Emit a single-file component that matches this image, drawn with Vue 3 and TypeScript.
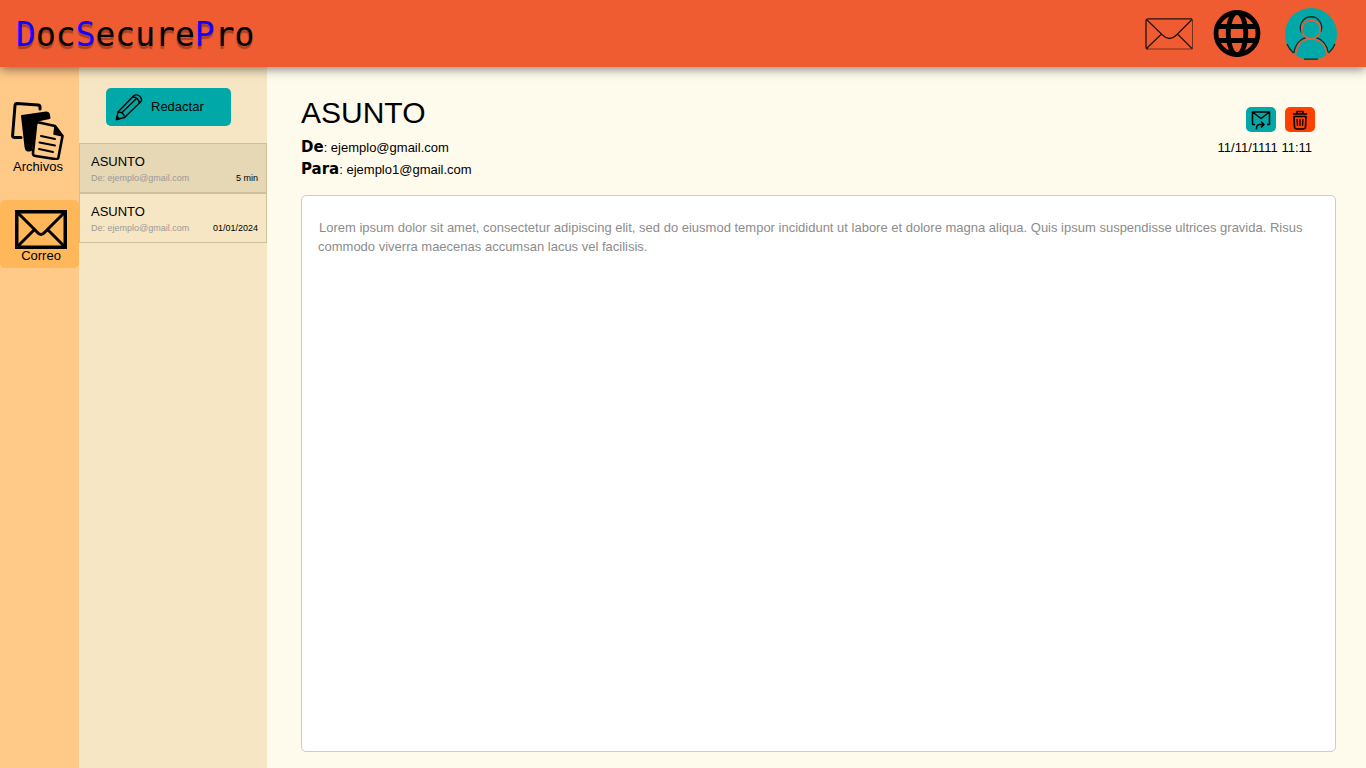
<script setup lang="ts">
import { ref } from 'vue'

interface Mail {
  id: number
  subject: string
  from: string
  when: string
}

const mails: Mail[] = [
  { id: 1, subject: 'ASUNTO', from: 'ejemplo@gmail.com', when: '5 min' },
  { id: 2, subject: 'ASUNTO', from: 'ejemplo@gmail.com', when: '01/01/2024' },
]
const selected = ref(1)
</script>

<template>
  <div class="app">
    <header class="topbar">
      <h1 class="logo"><span>D</span>oc<span>S</span>ecure<span>P</span>ro</h1>
      <div class="actions">
        <button class="icon-btn" type="button" aria-label="Mensajes">
          <svg width="48" height="34" viewBox="0 0 48 34" fill="none" stroke="#24130d">
            <path d="M47.500 2 V32 H3" stroke-width="0.600" />
            <path d="M47 1.800 H3 Q1 1.800 1 4 V30 Q1 32 3 32" stroke-width="1.300" />
            <path d="M1.500 2.500 L17.500 18 Q24.500 25 31.500 18 L47 2.500 M1.500 31.500 L16 17.500 M47 31.500 L33 17.500" stroke-width="1.200" />
          </svg>
        </button>
        <button class="icon-btn globe" type="button" aria-label="Idioma">
          <svg width="48" height="48" viewBox="0 0 48 48" fill="none" stroke="#000" stroke-width="4.800">
            <circle cx="24" cy="23.500" r="21" />
            <ellipse cx="24" cy="23.500" rx="8.800" ry="21" />
            <path d="M5 16.500 H43 M5 30.500 H43" />
          </svg>
        </button>
        <button class="icon-btn profile" type="button" aria-label="Perfil">
          <svg width="52" height="52" viewBox="0 0 52 52" fill="none">
            <circle cx="26" cy="26" r="26" fill="#00a9a8" />
            <g stroke="#062f2e" stroke-width="1.300">
              <path d="M17 25 A10.600 10.600 0 1 1 35.500 24" />
              <path d="M9 45 C10 36 16 30.500 21 29.500 M31 29.500 C37 31 42 37 43 44 M2 36 Q4 41 8.500 45 M50 36 Q48 41 43.500 45 M19 51.200 H33" />
            </g>
            <g stroke="#ef5c31" stroke-width="1.600">
              <circle cx="26" cy="21.500" r="9.300" />
              <path d="M10.500 47 C11 38 16 31 26 31 S41 38 42 47" />
            </g>
          </svg>
        </button>
      </div>
    </header>

    <div class="body">
      <nav class="rail">
        <a class="rail-link" href="#archivos">
          <svg width="54" height="60" viewBox="0 0 54 60" fill="none" stroke="#000" stroke-linejoin="round" stroke-linecap="round">
            <path d="M10 37.500 H3 Q1.500 37.500 1.600 35.500 L4 5.500 Q4.200 3.500 6 3.500 L27 5 Q29 5.200 29 7 V9" stroke-width="3" />
            <path d="M11 16 L35 12.500 Q37.500 12.500 38 15 L38.500 18 L29 20 Q25 21 24 25 L20 50 Q15 52 14.500 47 Z" fill="#000" stroke-width="2" />
            <path d="M28 22.500 L44 26 L51.500 36 L47.500 57 Q47 60 44 59 L24.500 56 Q21.500 55.500 22 52.500 L25 25 Q25.500 22 28 22.500 Z" stroke-width="2.600" />
            <path d="M44 26 L51.500 36 L43 34 Z" fill="#000" stroke-width="1.500" />
            <path d="M30 36 L44 39 M28.500 42.500 L44 45.500 M28 49 L42 52" stroke-width="2" />
          </svg>
          <span>Archivos</span>
        </a>
        <a class="rail-link active" href="#correo">
          <svg width="52" height="39" viewBox="0 0 52 39" fill="none" stroke="#000" stroke-width="3.500">
            <rect x="1.750" y="1.750" width="48.500" height="35.500" />
            <path d="M2 2 L22 22 Q26 27 30 22 L50 2 M2 37 L19 20 M50 37 L33 20" stroke-width="3" />
          </svg>
          <span>Correo</span>
        </a>
      </nav>

      <aside class="inbox">
        <button class="compose" type="button">
          <svg width="28" height="28" viewBox="0 0 28 28" fill="none" stroke="#000" stroke-width="1.400" stroke-linejoin="round" stroke-linecap="round">
            <path d="M1.500 26.500 L3 19 L18.500 3 Q21 0.800 24.500 3 Q27.500 6 26 8.500 L9.500 24.500 Z" />
            <path d="M3 19 Q9 19 9.500 24.500 M7 19.500 L21 6 M18 4 Q23.500 4.500 24.500 10" />
            <path d="M1.500 26.500 L2 23.500 L4.500 25.500 Z" fill="#000" />
          </svg>
          Redactar
        </button>
        <ul class="mails">
          <li v-for="mail in mails" :key="mail.id">
            <button type="button" class="mail" :class="{ selected: mail.id === selected }" @click="selected = mail.id">
              <span class="mail-subject">{{ mail.subject }}</span>
              <span class="mail-meta">
                <span class="mail-from">De: {{ mail.from }}</span>
                <span>{{ mail.when }}</span>
              </span>
            </button>
          </li>
        </ul>
      </aside>

      <main class="reader">
        <div class="reader-head">
          <div>
            <h2>ASUNTO</h2>
            <p><b>De</b>: ejemplo@gmail.com</p>
            <p><b>Para</b>: ejemplo1@gmail.com</p>
          </div>
          <div class="side">
            <div class="tools">
              <button class="tool reply" type="button" aria-label="Responder">
                <svg width="20" height="20" viewBox="0 0 20 20" fill="none" stroke="#000" stroke-width="1.500" stroke-linejoin="round">
                  <path d="M4 14.500 H1.500 V2 H18.500 V14.500 H16 M1.500 2 L10 8.500 L18.500 2" />
                  <path d="M5.500 19.500 V18.500 Q5.500 14.500 9 14.500 H12.500 M10 11.500 L13 14.500 L10 17.500" />
                </svg>
              </button>
              <button class="tool trash" type="button" aria-label="Eliminar">
                <svg width="16" height="20" viewBox="0 0 16 20" fill="none" stroke="#000" stroke-width="1.600" stroke-linejoin="round">
                  <path d="M1 4 H15 M5 3.500 V1.500 H11 V3.500 M2 6.500 L2.500 17 Q2.600 19 5 19 H11 Q13.400 19 13.500 17 L14 6.500 Z" />
                  <path d="M5 9 L5.500 16 M8 9 V16 M11 9 L10.500 16" stroke-width="1.300" />
                </svg>
              </button>
            </div>
            <time>11/11/1111 11:11</time>
          </div>
        </div>
        <article class="message">
          Lorem ipsum dolor sit amet, consectetur adipiscing elit, sed do eiusmod tempor incididunt ut labore et dolore magna aliqua. Quis ipsum suspendisse ultrices gravida. Risus commodo viverra maecenas accumsan lacus vel facilisis.
        </article>
      </main>
    </div>
  </div>
</template>

<style>
body {
  margin: 0;
}
</style>

<style scoped>
.app {
  display: flex;
  flex-direction: column;
  min-height: 100vh;
  font: 13px/20px "Liberation Sans", Arial, sans-serif;
  color: #000;
  background: #fffbec;
}
button {
  font: inherit;
  color: inherit;
  border: 0;
  padding: 0;
  background: none;
  cursor: pointer;
}
svg {
  display: block;
  flex: none;
}
.topbar {
  position: relative;
  display: flex;
  align-items: center;
  justify-content: space-between;
  height: 67px;
  padding: 0 29px 0 16px;
  background: #ef5c31;
  box-shadow: 0 2px 10px rgba(0, 0, 0, 0.5);
}
.logo {
  margin: 0;
  padding-top: 2px;
  font: 33px/40px "DejaVu Sans Mono", monospace;
  text-shadow: 0 3px 1px rgba(0, 0, 0, 0.3);
}
.logo span {
  color: #1400ff;
}
.actions {
  display: flex;
  align-items: center;
}
.globe {
  margin: 0 24px 0 20px;
}
.body {
  display: flex;
  flex: 1;
}
.rail {
  width: 79px;
  padding-top: 33px;
  box-sizing: border-box;
  background: #ffc988;
}
.rail-link {
  display: flex;
  flex-direction: column;
  align-items: center;
  height: 100px;
  box-sizing: border-box;
  line-height: 14px;
  padding-right: 3px;
  color: inherit;
  text-decoration: none;
}
.rail-link.active {
  height: 68px;
  padding: 10px 0 0 3px;
  border-radius: 5px;
  background: #ffb759;
}
.inbox {
  width: 188px;
  background: #f7e6c3;
}
.compose {
  display: flex;
  align-items: center;
  gap: 8px;
  width: 125px;
  height: 38px;
  margin: 21px 0 17px 27px;
  padding-left: 9px;
  border-radius: 5px;
  background: #00a9a8;
}
.mails {
  margin: 0;
  padding: 0;
  list-style: none;
}
.mail {
  display: block;
  width: 100%;
  height: 50px;
  padding: 2px 8px 0 11px;
  text-align: left;
  border: 1px solid #cfc09b;
}
.mail.selected {
  background: #e6d7b5;
}
.mail-subject {
  display: block;
  line-height: 18px;
}
.mail-meta {
  display: flex;
  justify-content: space-between;
  font-size: 9px;
  line-height: 14px;
  white-space: nowrap;
}
.mail-from {
  color: #999;
}
.reader {
  display: flex;
  flex: 1;
  flex-direction: column;
  padding: 24px 30px 16px 34px;
}
.reader-head {
  display: flex;
  justify-content: space-between;
  margin-bottom: 14px;
}
h2 {
  margin: 0 0 2px;
  font-size: 30px;
  line-height: 44px;
  font-weight: 400;
}
p {
  margin: 0;
  line-height: 22px;
}
p b {
  font: bold 15px/20px "DejaVu Sans", sans-serif;
}
.side {
  padding: 16px 21px 0 0;
}
.tools {
  display: flex;
  justify-content: flex-end;
  gap: 9px;
  margin-bottom: 6px;
}
.tool {
  display: grid;
  place-items: center;
  width: 30px;
  height: 25px;
  border-radius: 5px;
}
.reply {
  background: #00a9a8;
}
.trash {
  background: #ff4000;
}
time {
  display: block;
  text-align: right;
  margin-right: 3px;
}
.message {
  flex: 1;
  padding: 22px 16px;
  text-indent: 1px;
  line-height: 19px;
  color: #8c8c8c;
  background: #fff;
  border: 1px solid #ccc;
  border-radius: 5px;
}
</style>
